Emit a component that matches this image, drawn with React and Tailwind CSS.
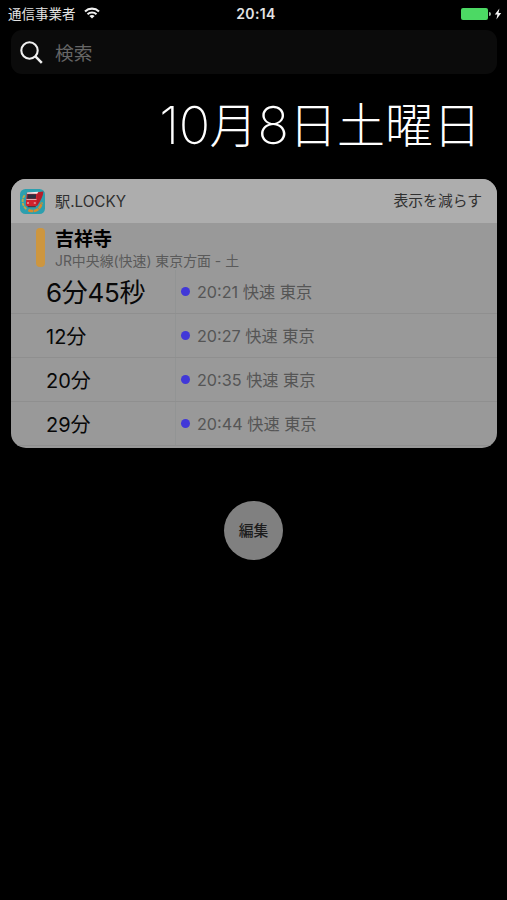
import React from 'react'

const departures = [
  { wait: '6分45秒', time: '20:21', soon: true },
  { wait: '12分', time: '20:27' },
  { wait: '20分', time: '20:35' },
  { wait: '29分', time: '20:44' },
]

function WifiIcon() {
  return (
    <svg width="16" height="12" viewBox="0 0 16 12" className="mb-[2px] ml-2" fill="none" stroke="#f2f2f2" strokeWidth="2.1">
      <path d="M1 4.4C4.9 .7 11.1 .7 15 4.4" />
      <path d="M3.5 7.2C6 4.9 10 4.9 12.5 7.2" />
      <path d="M8 11.6 5.4 9C6.9 7.7 9.1 7.7 10.6 9Z" fill="#f2f2f2" stroke="none" />
    </svg>
  )
}

function AppIcon() {
  return (
    <svg width="25" height="25" viewBox="0 0 25 25" className="shrink-0">
      <rect width="25" height="25" rx="5.5" fill="#2d9fae" />
      <path d="M4.6 6.2A10 10 0 0 0 7 20.5" fill="none" stroke="#c3a845" strokeWidth="1.8" strokeDasharray="3.2 .8" />
      <path d="M8.4 21C13.5 23.8 20.5 21 21.8 13.5" fill="none" stroke="#d98a2b" strokeWidth="2.6" strokeDasharray="5 .6" />
      {/* train side, then its front with the windscreen */}
      <path d="M15 3.4 23.4 2.6Q23 9 17 17L14.5 16Z" fill="#b81d29" />
      <path d="M7.8 3.6H16.4Q17.3 3.6 17.2 4.6L16.6 15.6Q16.4 17 15 17H7.4Q5.6 17 5.8 15.2L6.7 4.8Q6.8 3.6 7.8 3.6Z" fill="#d0222d" />
      <path d="M7.2 3.4 18.4 2.8 17.2 4.8H7Z" fill="#f3eeee" />
      <path d="M7.6 5.2H16.2L15.8 9.8H7.2Z" fill="#2b3040" />
      <path d="M6.4 10.5H16.5" stroke="#e9cccc" strokeWidth=".8" />
      <path d="M7 14H9M13.8 14H15.8" stroke="#f4d9d9" strokeWidth="1" />
      <path d="M7.6 17.6H15.8" stroke="#57323a" strokeWidth="1.1" />
    </svg>
  )
}

function StatusBar() {
  return (
    <div className="grid h-[30px] grid-cols-3 items-center pb-[2px] pl-[8px] pr-[5px] text-[#e4e4e4]">
      <div className="flex items-center whitespace-nowrap text-[13.5px] leading-5">
        <span>通信事業者</span>
        <WifiIcon />
      </div>
      <div className="pl-[2px] text-center text-[14px] font-semibold leading-5 tracking-[0.4px]">20:14</div>
      <div className="flex items-center justify-end pb-px">
        <div className="h-[12px] w-[27px] rounded-[2px] bg-[#4cd964]" />
        <div className="ml-px h-[4px] w-[2px] rounded-r bg-[#a5b5a8]" />
        <svg width="8" height="12" viewBox="0 0 8 12" className="ml-[3px]">
          <path d="M5.4 .5 .8 6.6H3.4L2.4 11.5 7.2 5H4.5Z" fill="#f4f4f4" />
        </svg>
      </div>
    </div>
  )
}

function Departure({ item }) {
  return (
    <div className="flex h-[44px] border-b border-[#8f8f8f]">
      <div className="flex w-[165px] shrink-0 items-center border-r border-[#929494] pl-[35px] pt-[3px] text-[#080808]">
        <span className={item.soon ? 'whitespace-nowrap text-[26px] leading-8 tracking-[-0.3px]' : 'whitespace-nowrap text-[20px] leading-7'}>
          {item.wait}
        </span>
      </div>
      <div className="flex items-center pl-[5px] pt-px text-[#555555]">
        <span className="mb-px mr-[7px] size-[9px] rounded-full bg-[#4138d8]" />
        <span className="whitespace-nowrap text-[16.2px] leading-6">{item.time} 快速 東京</span>
      </div>
    </div>
  )
}

export default function App() {
  return (
    <div className="h-[900px] w-[507px] overflow-hidden bg-black font-['Inter','Noto_Sans_CJK_JP',sans-serif]" lang="ja">
      <StatusBar />

      {/* Search */}
      <div className="ml-[11px] mr-[10px] flex h-[44px] items-center rounded-[11px] bg-[#0b0b0b] pl-[9px]">
        <svg width="23" height="23" viewBox="0 0 23 23" fill="none" stroke="#f0f0f0" strokeWidth="2.1">
          <circle cx="9.5" cy="9.5" r="8.2" />
          <path d="M15.4 15.4 21.8 21.8" strokeWidth="2.5" />
        </svg>
        <span className="ml-[12px] pt-[3px] text-[18.7px] leading-7 text-[#666666]">検索</span>
      </div>

      {/* Date */}
      <h1 className="flex h-[105px] items-center justify-end whitespace-nowrap pb-[1px] pr-[26px] text-[48px] font-light leading-[60px] text-white">
        <span className="text-[52px] font-extralight tracking-[-0.5px]">10</span>月<span className="text-[52px] font-extralight">8</span>日土曜日
      </h1>

      {/* Widget */}
      <section className="ml-[11px] mr-[10px] h-[269px] overflow-hidden rounded-[15px] bg-[#999999]">
        <header className="flex h-[44px] items-center bg-[#adadad] pl-[9px] pr-[15px] text-[#303030]">
          <AppIcon />
          <span className="ml-[10px] pt-px text-[15.2px] leading-6">駅.LOCKY</span>
          <span className="ml-auto text-[14.8px] leading-6">表示を減らす</span>
        </header>
        <div className="flex h-[47px] pl-[25px] pt-[5px]">
          <div className="h-[39px] w-[9px] rounded-[4px] bg-[#cd963f]" />
          <div className="ml-[10px] whitespace-nowrap">
            <h2 className="pt-px text-[19px] font-bold leading-[22px] text-black">吉祥寺</h2>
            <p className="text-[13.9px] leading-[20px] text-[#5a5a5a]">JR中央線(快速) 東京方面 - 土</p>
          </div>
        </div>
        {departures.map(d => <Departure key={d.time} item={d} />)}
      </section>

      <button className="mx-auto mt-[53px] flex size-[59px] items-center justify-center rounded-full bg-[#808080] text-[14.8px] font-medium leading-6 text-[#1c1c1c]">
        編集
      </button>
    </div>
  )
}
